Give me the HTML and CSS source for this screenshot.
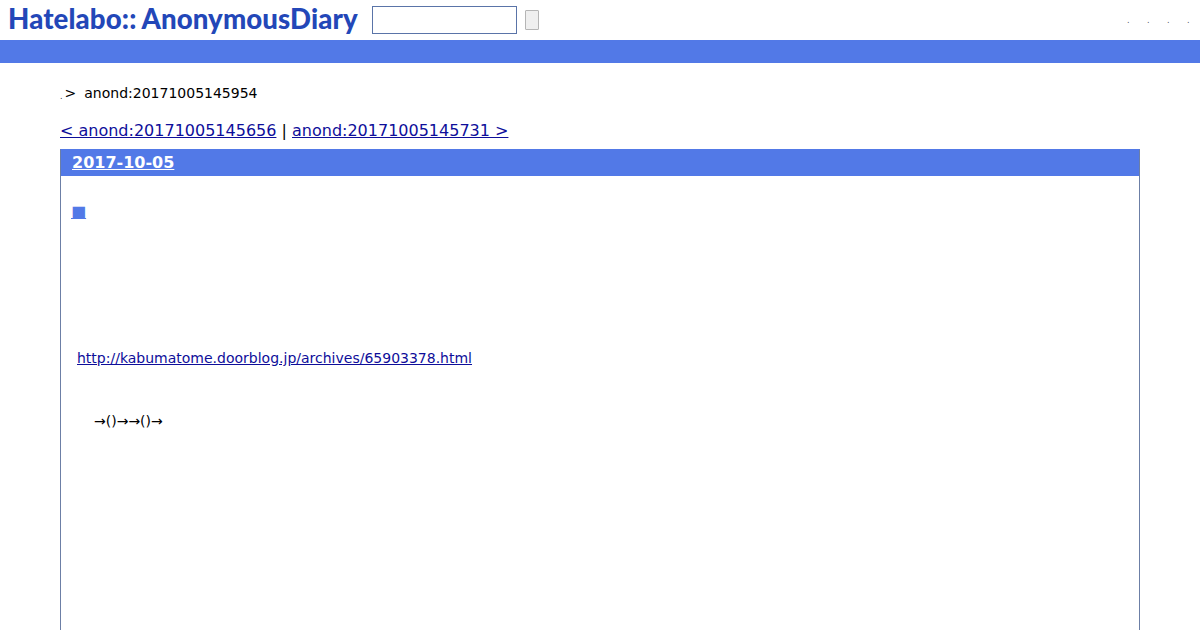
FILE: index.html
```html
<!DOCTYPE html>
<html lang="ja">
  <head>
    <meta charset="UTF-8" />
    <title>anond:20171005145954</title>
    <link rel="stylesheet" href="styles.css">
  </head>
  <body>
    <div class="header">
      <a class="logo" href="#">Hatelabo::<span class="logo-name">AnonymousDiary</span></a>
      <form class="search">
        <input type="text" class="search-text" />
        <input type="submit" class="search-btn" value="" />
      </form>
      <div class="header-links">
        <a href="#">.</a>
        <a href="#">.</a>
        <a href="#">.</a>
        <a href="#">.</a>
      </div>
    </div>
    <div class="bar"></div>

    <div class="main">
      <p class="breadcrumb"><a href="#">.</a><span class="sep">&gt;</span><span>anond:20171005145954</span></p>
      <p class="pager"><a href="#">&lt; anond:20171005145656</a> | <a href="#">anond:20171005145731 &gt;</a></p>

      <div class="day">
        <h2 class="day-title"><a href="#">2017-10-05</a></h2>
        <div class="day-body">
          <h3 class="entry-title"><a href="#"><span class="sanchor">■</span></a></h3>
          <p class="entry-link"><a href="#">http://kabumatome.doorblog.jp/archives/65903378.html</a></p>
          <p class="entry-text">→()→→()→</p>
        </div>
      </div>
    </div>
  </body>
</html>
```

FILE: styles.css
```css
html,
body {
  height: 630px;
  overflow: hidden;
}
body {
  margin: 0;
  background-color: #fff;
  color: #000;
  font-family: "DejaVu Sans", sans-serif;
  font-size: 14px;
}
a {
  color: #0e0e9a;
}
p {
  margin: 0;
}

.header {
  display: flex;
  align-items: center;
  height: 40px;
  padding-left: 8px;
}
.logo {
  width: 364px;
  margin-bottom: 3px;
  color: #2347b8;
  font-family: Lato, sans-serif;
  font-size: 27.6px;
  font-weight: 900;
  letter-spacing: 0.12px;
  text-decoration: none;
  white-space: nowrap;
}
.logo-name {
  margin-left: 5px;
}
.search {
  display: flex;
  align-items: center;
  gap: 8px;
}
.search-text {
  box-sizing: border-box;
  width: 145px;
  height: 28px;
  margin: 0;
  border: 1px solid #5a74a8;
  background: #fff;
}
.search-btn {
  box-sizing: border-box;
  width: 14px;
  height: 20px;
  margin: 0;
  padding: 0;
  border: 1px solid #b5b5b5;
  border-radius: 1px;
  background: #efefef;
}
.header-links {
  display: flex;
  gap: 16px;
  margin-left: auto;
  padding-right: 9px;
  font-size: 8px;
}
.header-links a {
  width: 4px;
  color: #555;
  text-decoration: none;
}

.bar {
  height: 23px;
  background-color: #5279e7;
}

.main {
  padding: 21px 60px 0;
}
.breadcrumb {
  display: flex;
  align-items: center;
  height: 17px;
}
.breadcrumb a {
  color: #333;
  font-size: 8px;
  text-decoration: none;
  align-self: flex-end;
}
.breadcrumb .sep {
  margin: 0 8px 0 2px;
}
.pager {
  margin-top: 20px;
  font-size: 16px;
  line-height: 20px;
}
.day {
  margin-top: 8px;
  border: 1px solid #5279e7;
  border-left-color: #6c7fa6;
  border-right-color: #6c7fa6;
  height: 500px;
}
.day-title {
  margin: 0;
  padding-left: 11px;
  background-color: #5279e7;
  font-size: 16px;
  line-height: 26px;
}
.day-title a {
  color: #fff;
}
.day-body {
  padding: 0 16px;
}
.entry-title {
  margin: 25px 0 0 -8px;
  font-size: 16px;
  font-weight: 400;
  line-height: 22px;
}
.entry-title a {
  color: #5279e7;
}
.entry-title .sanchor {
  padding-left: 2px;
}
.entry-link {
  margin-top: 127px;
  line-height: 17px;
}
.entry-text {
  margin: 46px 0 0 17px;
  line-height: 17px;
}
```
